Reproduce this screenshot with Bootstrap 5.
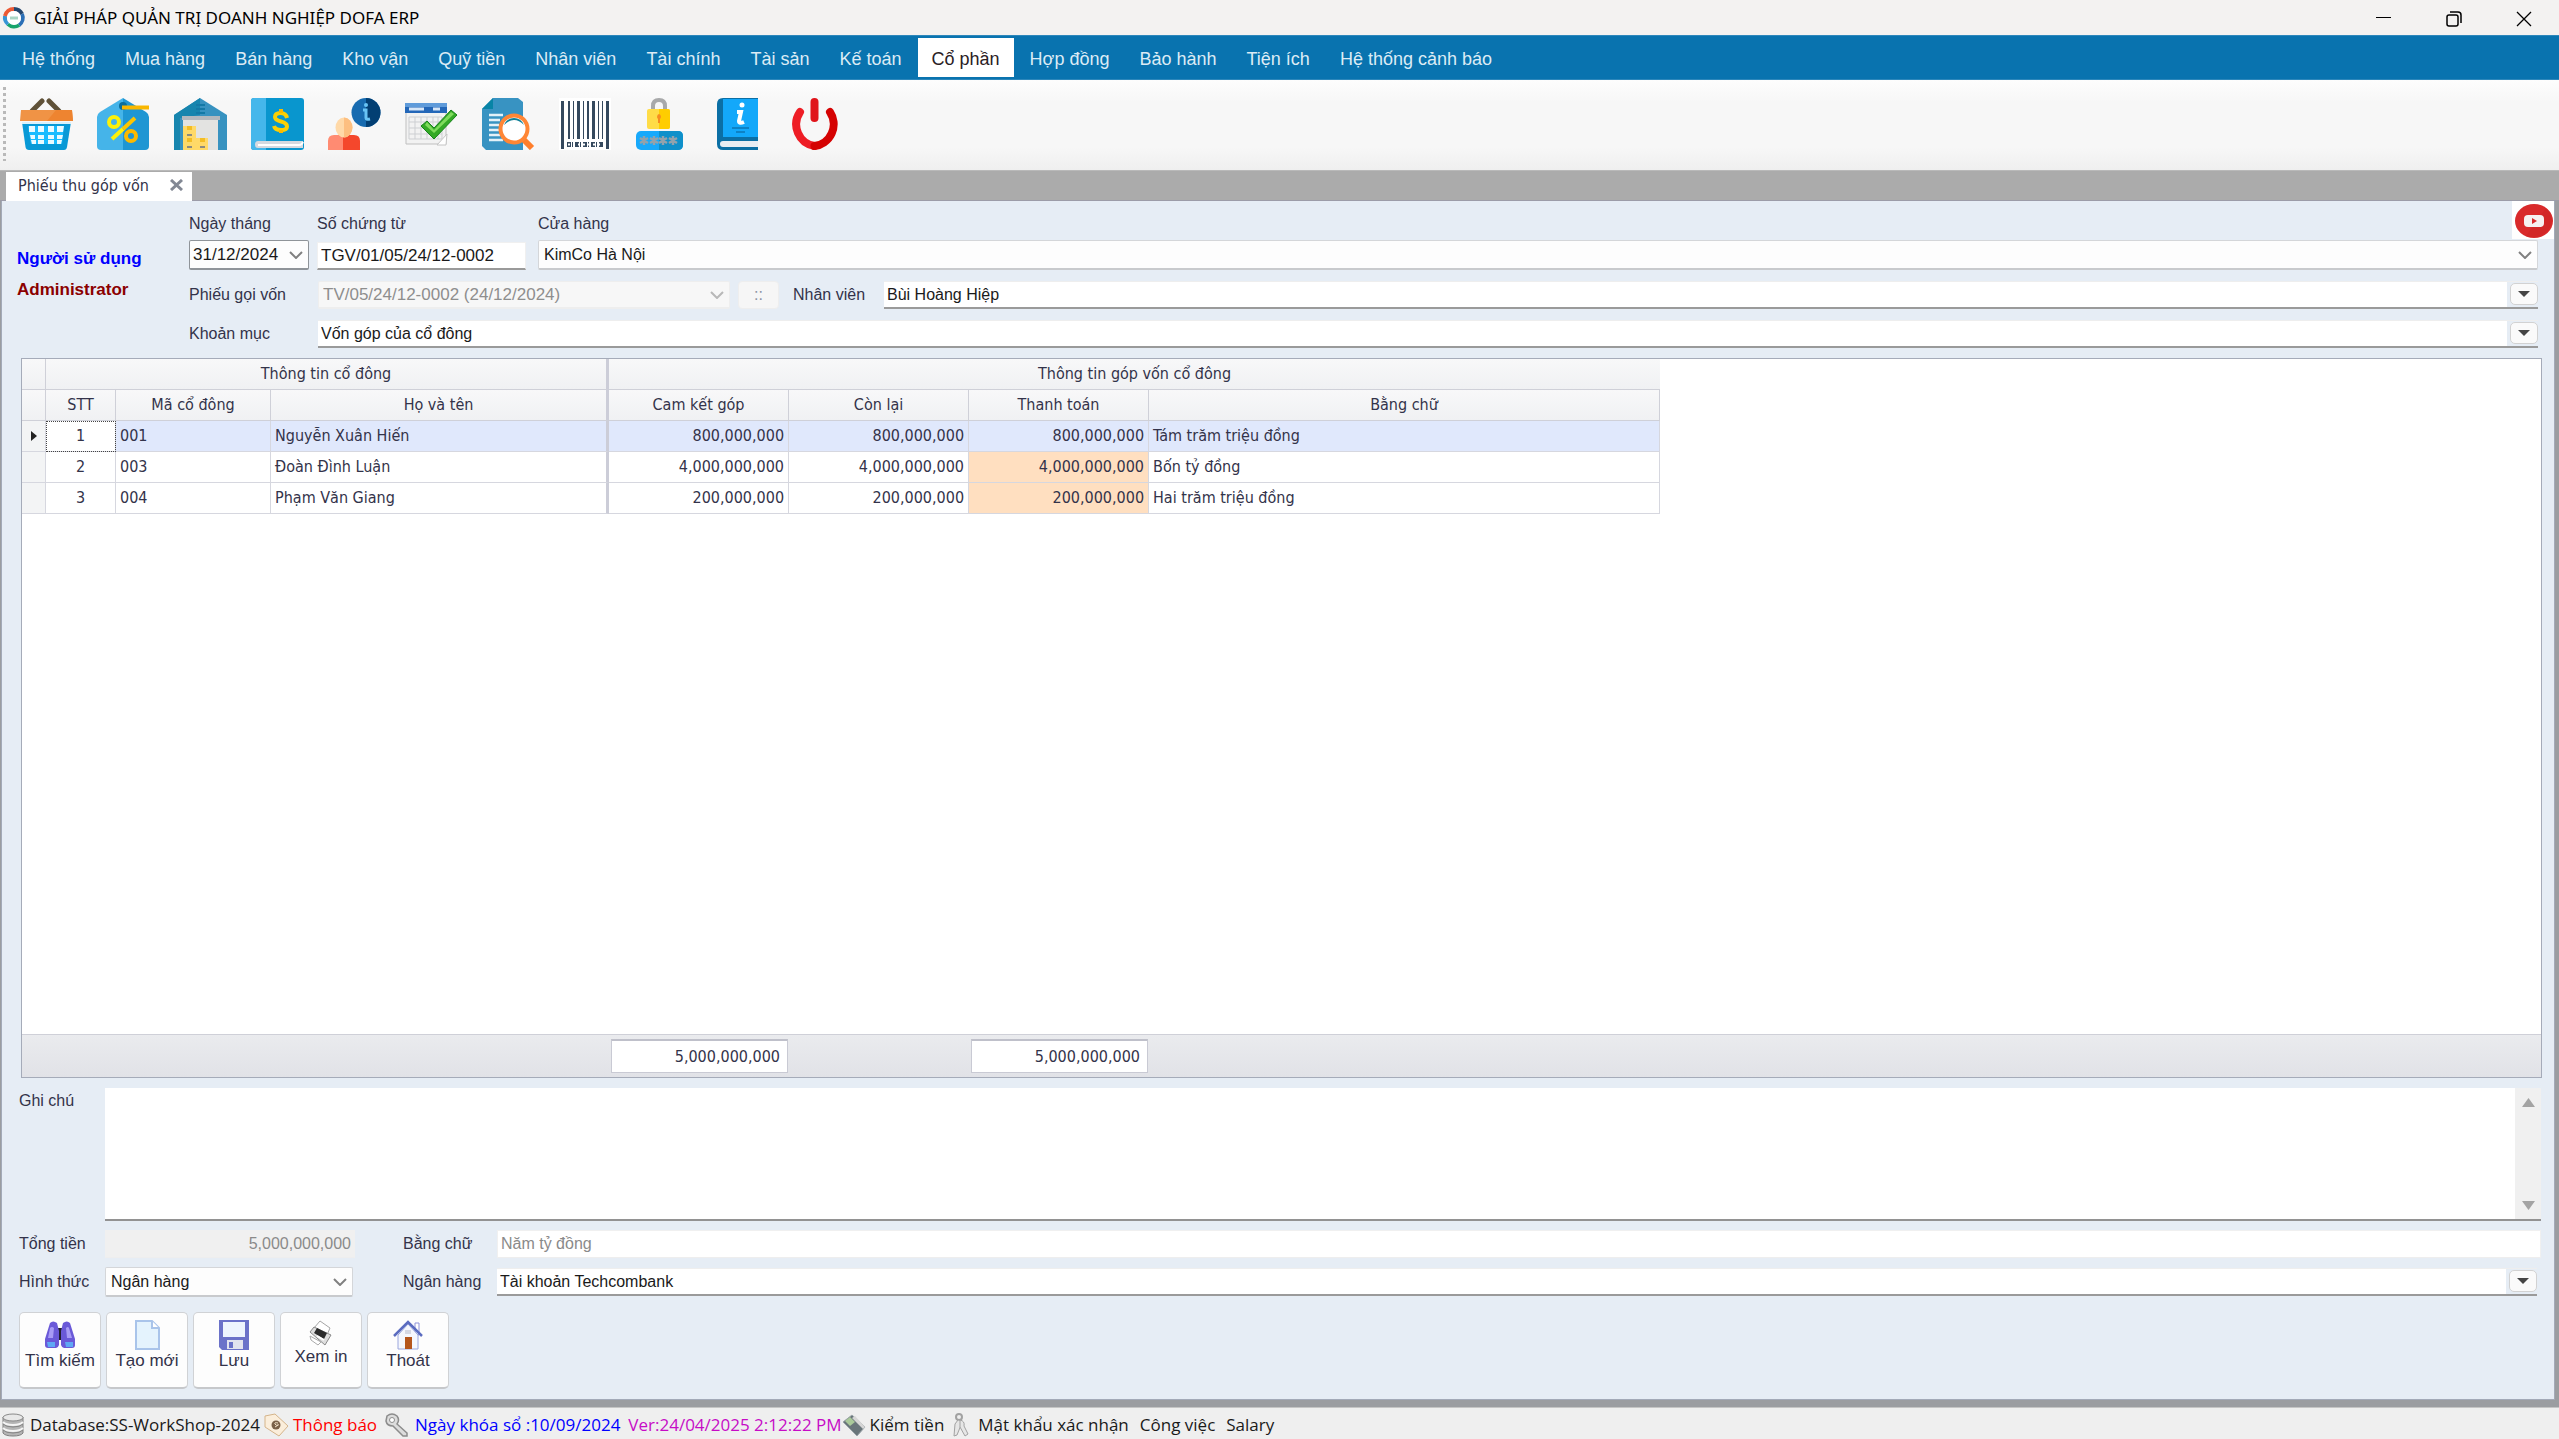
<!DOCTYPE html>
<html lang="vi">
<head>
<meta charset="utf-8">
<meta name="viewport" content="width=device-width, initial-scale=1">
<title>GIẢI PHÁP QUẢN TRỊ DOANH NGHIỆP DOFA ERP</title>
<link href="https://cdn.jsdelivr.net/npm/bootstrap@5.3.0/dist/css/bootstrap.min.css" rel="stylesheet">
<style>
  :root { --ui: "Liberation Sans", Arial, sans-serif; --grid: "DejaVu Sans Condensed", "DejaVu Sans", sans-serif; --shell: "Open Sans", "Noto Sans", sans-serif; --ink: #33334a; }
  body { font: 16px/20px var(--ui); color: var(--ink); background: #efefef; }
  button { font: inherit; color: inherit; }
  /* window chrome */
  .title-bar { height: 35px; background: #f3f2f1; font: 17px/24px "Noto Sans", sans-serif; color: #000; padding-left: 2px; }
  .win-btn { width: 70px; height: 35px; border: 0; background: none; padding: 0; }
  .main-menu { height: 45px; background: #0973af; border-top: 1px solid #2d87bb; border-bottom: 1px solid #2d87bb; padding: 2px 0 2px 8px; }
  .main-menu .nav-link { font-size: 18px; line-height: 20px; color: #dcebf5; padding: 11px 14px 8px; height: 39px; margin-right: 2px; white-space: nowrap; }
  .main-menu .nav-link.active { background: #fff; color: #2a2024; }
  .tool-bar { height: 90px; background: linear-gradient(#fdfdfd, #f7f7f7 25%, #f7f7f7 75%, #efefef); gap: 24px; padding: 0 0 2px 3px; }
  .tool-bar button { border: 0; background: none; padding: 0; width: 53px; height: 52px; display: block; }
  .tool-bar svg { width: 53px; height: 52px; display: block; }
  .grip { width: 3px; height: 74px; margin-right: -10px; background: repeating-linear-gradient(#b9b9b9 0 3px, transparent 3px 6px); }
  .tab-strip { height: 31px; background: #ababab; border-top: 1px solid #b9b9b9; border-bottom: 1px solid #9c9ca8; padding: 1px 0 0 6px; }
  .doc-tab { width: 186px; height: 30px; background: #fff; font: 16px/28px var(--grid); padding-left: 12px; }
  .doc-tab button { width: 18px; height: 18px; border: 0; background: none; padding: 0; display: flex; align-items: center; justify-content: center; margin: 4px 7px 0 0; }
  /* form */
  .frame { background: #9b9da1; padding: 0 4px 7px 1px; border-bottom: 1px solid #c5c5c5; }
  .panel { background: #e6edf5; border: solid #a3aab8; border-width: 0 1px 1px 1px; }
  .who { width: 187px; padding: 35px 0 0 15px; font-size: 17px; font-weight: 700; color: #00f; }
  .who .role { color: #8b0000; margin-top: 11px; }
  .entry { height: 28px; border: 1px solid #f0f0f0; border-bottom: 2px solid #9a9a9a; background: #fff; color: #1a1a1a; font: 16px/20px var(--ui); padding: 2px 3px; border-radius: 0; min-width: 0; }
  .entry.digits { font-size: 17px; }
  .entry:disabled, .entry.flat { border-bottom: 1px solid #eee; color: #8a8a8a; opacity: 1; }
  .entry:disabled { background: #f0f0f0; }
  .pick { height: 30px; border: 1px solid #d4d6d9; border-bottom: 2px solid #c8cacd; background: #fdfdfd no-repeat right 5px center; border-radius: 2px; color: #1a1a1a; font: 16px/20px var(--ui); padding: 3px 5px;
    background-image: url("data:image/svg+xml,%3Csvg xmlns='http://www.w3.org/2000/svg' width='14' height='8' fill='none' stroke='%23808080' stroke-width='2'%3E%3Cpath d='M1 1l6 6 6-6'/%3E%3C/svg%3E"); appearance: none; min-width: 0; }
  .pick.date-pick { font-size: 17px; border-color: #8f9499; padding: 3px; }
  .pick.muted-pick { height: 28px; font-size: 17px; border-color: #eee; background-color: #f7f7f7; color: #8e8e8e; padding: 2px 4px; opacity: 1;
    background-image: url("data:image/svg+xml,%3Csvg xmlns='http://www.w3.org/2000/svg' width='14' height='8' fill='none' stroke='%23b8b8b8' stroke-width='2'%3E%3Cpath d='M1 1l6 6 6-6'/%3E%3C/svg%3E"); }
  .combo { height: 28px; border-bottom: 2px solid #9a9a9a; border-top: 1px solid #eee; min-width: 0; }
  .combo input { border: 0; height: 25px; background: #fff; color: #1a1a1a; padding: 0 3px; min-width: 0; font: 16px/20px var(--ui); }
  .combo button { width: 28px; height: 22px; border: 1px solid #d2d2d2; border-radius: 5px; background: #fafafa; margin: 1px 0 1px 3px; padding: 0; display: flex; align-items: center; justify-content: center; }
  .tiny-btn { width: 41px; height: 28px; border: 1px solid #eee; border-radius: 4px; background: #f6f6f6; color: #8b93a3; padding: 0; }
  .top-form { padding: 13px 16px 10px 0; }
  .stack { gap: 6px; }
  .form-lines { gap: 11px; }
  .w-date { width: 120px; }
  .w-docno { width: 209px; }
  .w-call { width: 412px; }
  .w-staff { width: 91px; margin-left: 14px; }
  .line-label { width: 129px; }
  .yt { top: 0; right: 0; width: 42px; height: 38px; background: #fff; border: 0; padding: 0; }
  .yt svg { display: block; }
  /* grid */
  .sheet { margin: 0 12px 0 19px; border: 1px solid #a5abb9; background: #fff; font: 16px/20px var(--grid); }
  .sheet table { table-layout: fixed; width: 1638px; border-collapse: separate; border-spacing: 0; margin: 0; }
  .c-mark { width: 24px; } .c-no { width: 70px; } .c-code { width: 155px; } .c-name { width: 338px; } .c-sum { width: 180px; } .c-words { width: 511px; }
  .sheet th { font-weight: 400; height: 31px; padding: 0 3px; text-align: center; background: linear-gradient(#f8f8f9, #f0f1f3); border-right: 1px solid #cfd0d8; border-bottom: 1px solid #cfd0d8; }
  .sheet thead tr:first-child th:last-child { border-right: 0; }
  .sheet td { height: 31px; padding: 0 4px; border-right: 1px solid #d6d7df; border-bottom: 1px solid #d6d7df; }
  .sheet .mark-col { background: #f3f4f5; }
  .sheet .split-col { border-right: 3px solid #cccdd8; }
  .sheet .pay { background: #ffdfc0; }
  .sheet tr.current td { background: #e0e8fc; }
  .sheet tr.current td.mark-col { background: #f3f4f5; }
  .sheet tr.current td.focus-cell { background: #fff; outline: 1px dotted #444; outline-offset: -1px; }
  .sums { height: 43px; border-top: 1px solid #cfd0d8; background: linear-gradient(#eaebee, #e1e2e7); padding: 4px 0 0 589px; gap: 183px; }
  .sums input { width: 177px; height: 34px; border: 1px solid #c9cad4; border-top: 2px solid #bfc0ca; background: #fff; text-align: right; padding: 0 7px; font: 16px/20px var(--grid); color: inherit; }
  /* lower form */
  .low-form { padding: 10px 13px 10px 17px; }
  .low-lines { gap: 9px; }
  .low-label { width: 86px; }
  .note-label { padding-top: 3px; }
  .w-total { width: 250px; }
  .w-method { width: 248px; margin-right: 2px; }
  .mid-label { width: 94px; margin-left: 48px; }
  .notes { height: 133px; border-bottom: 2px solid #929292; background: #fff; }
  .notes textarea { border: 0; resize: none; background: #fff; overflow: hidden; padding: 4px; }
  .scroller { width: 26px; background: #f0f0f0; padding: 10px 0 8px; }
  .actions { gap: 5px; padding-top: 6px; }
  .act { width: 82px; height: 77px; border: 1px solid #d0d2d5; border-bottom: 2px solid #c6c8cb; border-radius: 5px; background: #fdfdfd; padding: 7px 0 0; font: 17px/22px var(--ui); white-space: nowrap; display: flex; flex-direction: column; align-items: center; }
  .act svg { display: block; flex: none; }
  .status-bar { height: 31px; background: #efefef; font: 17px/24px var(--shell); color: #1a1a1a; padding: 2px 0 0 2px; white-space: nowrap; }
  .status-bar svg { display: block; flex: none; }
  .status-bar .near-item { margin-left: 6px; }
  .status-bar .gap-item { margin-left: 11px; }
  .alert-text { color: #f00; } .lock-text { color: #00f; } .ver-text { color: #c60cc6; }
</style>
</head>
<body class="d-flex flex-column min-vh-100">

<header class="title-bar d-flex align-items-center">
  <svg width="24" height="24" viewBox="0 0 24 24" fill="none" stroke-width="4" class="me-2"><path d="M12 3a9 9 0 0 1 8 5" stroke="#24476f"/><path d="M20 8a9 9 0 0 1-3 11" stroke="#2b6fb6"/><path d="M17 19a9 9 0 0 1-11-1" stroke="#17a46c"/><path d="M6 18A9 9 0 0 1 3 10" stroke="#3795d5"/><path d="M3 10a9 9 0 0 1 9-7" stroke="#ec5a36"/><circle cx="12" cy="12" r="7" fill="#fff" stroke="none"/><path d="M8 12h8" stroke="#a9d5c4" stroke-width="3"/></svg>
  <span class="flex-grow-1">GIẢI PHÁP QUẢN TRỊ DOANH NGHIỆP DOFA ERP</span>
  <button class="win-btn" aria-label="Thu nhỏ"><svg width="16" height="16" stroke="#000"><path d="M0 6.500h15"/></svg></button>
  <button class="win-btn" aria-label="Phục hồi"><svg width="16" height="16" viewBox="0 0 16 16" fill="none" stroke="#000" stroke-width="1.500"><rect x="1" y="4" width="11" height="11" rx="2"/><path d="M4 1h8q3 0 3 3v8"/></svg></button>
  <button class="win-btn" aria-label="Đóng"><svg width="16" height="16" stroke="#000" stroke-width="1.300"><path d="M1 1l14 14M15 1L1 15"/></svg></button>
</header>

<nav class="main-menu nav flex-nowrap">
  <a class="nav-link" href="#">Hệ thống</a><a class="nav-link" href="#">Mua hàng</a><a class="nav-link" href="#">Bán hàng</a><a class="nav-link" href="#">Kho vận</a><a class="nav-link" href="#">Quỹ tiền</a><a class="nav-link" href="#">Nhân viên</a><a class="nav-link" href="#">Tài chính</a><a class="nav-link" href="#">Tài sản</a><a class="nav-link" href="#">Kế toán</a><a class="nav-link active" href="#" aria-current="page">Cổ phần</a><a class="nav-link" href="#">Hợp đồng</a><a class="nav-link" href="#">Bảo hành</a><a class="nav-link" href="#">Tiện ích</a><a class="nav-link" href="#">Hệ thống cảnh báo</a>
</nav>

<div class="tool-bar d-flex align-items-center" role="toolbar">
  <span class="grip"></span>
  <button aria-label="Mua hàng"><svg viewBox="0 0 53 52"><path d="M22 3L12 13M29 3l10 10" stroke="#5f5138" stroke-width="5" stroke-linecap="round"/><path d="M2 24h49l-4 25q-.5 3-3 3H9q-3 0-3.500-3z" fill="#0899d6"/><path d="M2 24h49v2H2z" fill="#d9f1fb"/><path d="M8 28h36l-2 18H11z" fill="#19bcff"/><path d="M9 28h6v6H9zm9 0h6v6h-6zm10 0h6v6h-6zm9 0h7l-1 6h-6zM10 37h5v4h-4zm8 0h6v4h-6zm10 0h6v4h-6zm9 0h6l-1 4h-5zM11 42h5v4h-4zm7 0h6v4h-6zm10 0h6v4h-6zm9 0h5l-1 4h-4z" fill="#eafaff"/><path d="M1 12h51l1 11H0z" fill="#f09345"/><path d="M36 12h16l1 11H27z" fill="#ee8430"/></svg></button>
  <button aria-label="Khuyến mại"><svg viewBox="0 0 53 52"><path d="M26 0L3 14q-3 2-3 5v29q0 4 4 4h22z" fill="#45b4e9"/><path d="M26 0l23 14q3 2 3 5v29q0 4-4 4H26z" fill="#1f96d3"/><circle cx="26" cy="8" r="4" fill="#0a6e9c"/><path d="M25 9.500h27" stroke="#f9b700" stroke-width="4"/><circle cx="17" cy="24" r="5" fill="none" stroke="#fbf10a" stroke-width="4"/><path d="M15 41l11-10" stroke="#fbf10a" stroke-width="4"/><path d="M26 31l12-11" stroke="#fdc500" stroke-width="4"/><circle cx="34" cy="38" r="5" fill="none" stroke="#fbb900" stroke-width="4"/></svg></button>
  <button aria-label="Kho"><svg viewBox="0 0 53 52"><path d="M0 17L26 0l27 17v35H0z" fill="#3792c0"/><path d="M0 17L26 0v17L6 20v32H0z" fill="#1785ae"/><path d="M22 7h9M22 11h9M22 15h9" stroke="#1479a6" stroke-width="2"/><path d="M9 22h35v30H9z" fill="#e3e3e1"/><path d="M8 18h38v4H8z" fill="#b3b8be"/><path d="M9 28h13v24H9zM22 40h12v12H22z" fill="#ffd968"/><path d="M13 28h5v4h-5zm0 12h5v4h-5zm13 0h5v4h-5z" fill="#f3bd25"/><path d="M13 36h5v2h-5zm0 12h5v2h-5zm13 0h5v2h-5z" fill="#8c8a80"/></svg></button>
  <button aria-label="Sổ quỹ"><svg viewBox="0 0 53 52"><rect width="53" height="52" rx="3" fill="#0996ce"/><path d="M15 0H3Q0 0 0 3v46q0 3 3 3h12z" fill="#45b7eb"/><path d="M52 43H7q-3 0-3 3.500T7 50h45" fill="#d5d9df"/><path d="M52 44q-1 3-4 3H7" fill="none" stroke="#fff" stroke-width="2"/><path d="M36 20q-1-5-6.500-5T24 19q0 3 6 4.500t6 5Q36 32 30 32t-7-4" fill="none" stroke="#fbd005" stroke-width="4"/><path d="M30 11v4m0 17v3" stroke="#fbb900" stroke-width="4"/></svg></button>
  <button aria-label="Khách hàng"><svg viewBox="0 0 53 52"><path d="M0 52v-9q0-6 6-6h10v15z" fill="#ff8b72"/><path d="M32 52v-9q0-6-6-6H15v15z" fill="#f4472c"/><ellipse cx="16" cy="29.500" rx="8.500" ry="10" fill="#ffd9a8"/><path d="M16 19.500a8.500 10 0 0 1 0 20z" fill="#fdbf80"/><circle cx="38" cy="14.500" r="14.500" fill="#176bb0"/><path d="M38 0a14.500 14.500 0 0 1 0 29z" fill="#023f73"/><circle cx="38" cy="7" r="2" fill="#68c4f5"/><path d="M35 12h3v8q0 2 4 1" fill="none" stroke="#68c4f5" stroke-width="3"/></svg></button>
  <button aria-label="Lịch"><svg viewBox="0 0 53 52"><path d="M1 6h40v40H1z" fill="#f2f2f2" stroke="#bfbfbf"/><path d="M4 19h33v22H4zM10 19v22m6-22v22m6-22v22m6-22v22m5-22v22M4 24h33M4 30h33M4 36h33" fill="none" stroke="#cdcfd2"/><path d="M0 5h42v10H0z" fill="#2467b8"/><path d="M0 5h42v4H0z" fill="#5f9bda"/><path d="M4 11h15m9 0h7" stroke="#d6e6f7" stroke-width="3"/><path d="M42 36L32 47h9z" fill="#fff" stroke="#c4c4c4"/><path d="M16 28l6-5 7 7 17-18 6 5-23 24z" fill="#34a926" stroke="#16841b"/><path d="M20 27l9 8 20-19-3-2-17 18-7-8z" fill="#7fdb5d"/></svg></button>
  <button aria-label="Tìm chứng từ"><svg viewBox="0 0 53 52"><path d="M11 0h25l5 4v48H4l-4-4V11z" fill="#3893c2"/><path d="M11 0v11H0z" fill="#0884a6"/><path d="M7 17h14M7 22h11M7 27h10M7 32h10M7 37h11M7 42h14" stroke="#e3f1f8" stroke-width="2.500"/><path d="M42 42l8 8" stroke="#ff7e2b" stroke-width="6"/><circle cx="32" cy="31" r="13.500" fill="#fff" stroke="#ff8635" stroke-width="4"/><path d="M22 27q3-7 10-7t10 7q-5-5-10-5t-10 5" fill="#0f7f96"/></svg></button>
  <button aria-label="Mã vạch"><svg viewBox="0 0 53 52"><path d="M0 0h52v52H0z" fill="#fff"/><g fill="#35495e"><path d="M2 3h3v48H2zM47 3h3v48h-3zM9 3h2v38H9zM14 3h1v38h-1zM18 3h3v38h-3zM24 3h1v38h-1zM28 3h2v38h-2zM33 3h3v38h-3zM39 3h1v38h-1zM43 3h1v38h-1z"/></g><path d="M8 46.500h37" stroke="#35495e" stroke-width="5" stroke-dasharray="4 1 1 2"/><path d="M9 46.500h35" stroke="#fff" stroke-width="2" stroke-dasharray="2 3"/></svg></button>
  <button aria-label="Mật khẩu"><svg viewBox="2 0 53 52"><path d="M19 12V8q0-6 6-6t6 6v4" fill="none" stroke="#a8a9aa" stroke-width="4"/><rect x="13" y="11" width="23" height="20" rx="2" fill="#ffdc47"/><path d="M25 11h9q2 0 2 2v16q0 2-2 2h-9z" fill="#ffcd00"/><path d="M25 16a3 3 0 0 1 1 5v4h-2v-4a3 3 0 0 1 1-5" fill="#f78c1f"/><rect x="2" y="33" width="47" height="19" rx="5" fill="#18a9fb"/><path d="M25 33h19q5 0 5 5v9q0 5-5 5H25z" fill="#0f90ca"/><path d="M10 38v9m-4-7l8 5m0-5l-8 5M20 38v9m-4-7l8 5m0-5l-8 5M29 38v9m-4-7l8 5m0-5l-8 5M39 38v9m-4-7l8 5m0-5l-8 5" stroke="#93a2ac" stroke-width="2.500"/></svg></button>
  <button aria-label="Hướng dẫn"><svg viewBox="2 0 53 52"><path d="M47 0H12Q6 0 6 6v40q0 6 6 6h35z" fill="#0b6fa5"/><path d="M12 1h35v38H12z" fill="#13a8fa"/><path d="M47 43H12q-3 0-3 3t3 3h35z" fill="#e8edf3"/><circle cx="31" cy="7" r="2.500" fill="#fff"/><path d="M26 14h4l-2 9q0 3 5 1" fill="none" stroke="#fff" stroke-width="4"/><path d="M21 30h17M25 34h9" stroke="#0d82c5" stroke-width="2"/></svg></button>
  <button aria-label="Thoát chương trình"><svg viewBox="2 0 53 52"><path d="M12 14A22 22 0 0 0 26.500 48" fill="none" stroke="#ee1d25" stroke-width="8" stroke-linecap="round"/><path d="M42 14a22 22 0 0 1-15.500 34" fill="none" stroke="#d50202" stroke-width="8" stroke-linecap="round"/><path d="M26.500 4v16" stroke="#e0141a" stroke-width="8" stroke-linecap="round"/></svg></button>
</div>

<div class="tab-strip">
  <div class="doc-tab d-flex"><span class="flex-grow-1">Phiếu thu góp vốn</span><button aria-label="Đóng thẻ"><svg width="13" height="12" stroke="#828894" stroke-width="3"><path d="M1 1l11 10M12 1L1 11"/></svg></button></div>
</div>

<main class="frame flex-grow-1 d-flex flex-column">
<div class="panel flex-grow-1 d-flex flex-column position-relative">
  <button class="yt position-absolute" aria-label="Video hướng dẫn"><svg width="42" height="38" viewBox="0 0 42 38"><ellipse cx="22" cy="20" rx="19" ry="17" fill="#d92a2b"/><path d="M34 7a19 17 0 0 1-20 28z" fill="#cb2324" opacity=".5"/><rect x="12" y="14" width="20" height="12" rx="4" fill="#f6f1f1"/><path d="M20 17v6l5-3z" fill="#d92a2b"/></svg></button>

  <div class="top-form d-flex">
    <div class="who">
      <div>Người sử dụng</div>
      <div class="role">Administrator</div>
    </div>
    <div class="form-lines flex-grow-1 d-flex flex-column">
      <div class="d-flex">
        <div class="w-date stack d-flex flex-column"><label for="ngay">Ngày tháng</label><input id="ngay" class="pick date-pick" value="31/12/2024"></div>
        <div class="w-docno stack d-flex flex-column justify-content-between ms-2"><label for="so">Số chứng từ</label><input id="so" class="entry digits" value="TGV/01/05/24/12-0002"></div>
        <div class="stack d-flex flex-column ms-2 ps-1 flex-grow-1"><label for="ch">Cửa hàng</label><select id="ch" class="pick"><option>KimCo Hà Nội</option></select></div>
      </div>
      <div class="d-flex align-items-center">
        <label for="goi" class="line-label">Phiếu gọi vốn</label>
        <select id="goi" class="pick muted-pick w-call" disabled><option>TV/05/24/12-0002 (24/12/2024)</option></select>
        <button class="tiny-btn ms-2">::</button>
        <label for="nv" class="w-staff">Nhân viên</label>
        <div class="combo flex-grow-1 d-flex"><input id="nv" class="flex-grow-1" value="Bùi Hoàng Hiệp"><button aria-label="Chọn nhân viên"><svg width="12" height="6"><path d="M0 0h12L6 6z" fill="#444"/></svg></button></div>
      </div>
      <div class="d-flex align-items-center">
        <label for="km" class="line-label">Khoản mục</label>
        <div class="combo flex-grow-1 d-flex"><input id="km" class="flex-grow-1" value="Vốn góp của cổ đông"><button aria-label="Chọn khoản mục"><svg width="12" height="6"><path d="M0 0h12L6 6z" fill="#444"/></svg></button></div>
      </div>
    </div>
  </div>

  <section class="sheet flex-grow-1 d-flex flex-column">
    <div class="flex-grow-1">
      <table>
        <colgroup><col class="c-mark"><col class="c-no"><col class="c-code"><col class="c-name"><col class="c-sum"><col class="c-sum"><col class="c-sum"><col class="c-words"></colgroup>
        <thead>
          <tr><th></th><th colspan="3" class="split-col">Thông tin cổ đông</th><th colspan="4">Thông tin góp vốn cổ đông</th></tr>
          <tr><th></th><th>STT</th><th>Mã cổ đông</th><th class="split-col">Họ và tên</th><th>Cam kết góp</th><th>Còn lại</th><th>Thanh toán</th><th>Bằng chữ</th></tr>
        </thead>
        <tbody>
          <tr class="current"><td class="mark-col"><svg width="6" height="10" class="d-block mx-auto"><path d="M0 0l6 5-6 5z" fill="#222"/></svg></td><td class="text-center focus-cell">1</td><td>001</td><td class="split-col">Nguyễn Xuân Hiến</td><td class="text-end">800,000,000</td><td class="text-end">800,000,000</td><td class="text-end">800,000,000</td><td>Tám trăm triệu đồng</td></tr>
          <tr><td class="mark-col"></td><td class="text-center">2</td><td>003</td><td class="split-col">Đoàn Đình Luận</td><td class="text-end">4,000,000,000</td><td class="text-end">4,000,000,000</td><td class="text-end pay">4,000,000,000</td><td>Bốn tỷ đồng</td></tr>
          <tr><td class="mark-col"></td><td class="text-center">3</td><td>004</td><td class="split-col">Phạm Văn Giang</td><td class="text-end">200,000,000</td><td class="text-end">200,000,000</td><td class="text-end pay">200,000,000</td><td>Hai trăm triệu đồng</td></tr>
        </tbody>
      </table>
    </div>
    <div class="sums d-flex"><input readonly aria-label="Tổng cam kết góp" value="5,000,000,000"><input readonly aria-label="Tổng thanh toán" value="5,000,000,000"></div>
  </section>

  <div class="low-form">
    <div class="low-lines d-flex flex-column">
      <div class="d-flex">
        <label for="gc" class="low-label note-label">Ghi chú</label>
        <div class="notes flex-grow-1 d-flex">
          <textarea id="gc" class="flex-grow-1"></textarea>
          <div class="scroller d-flex flex-column justify-content-between align-items-center"><svg width="13" height="10"><path d="M6.500 0L13 9H0z" fill="#a3a3a3"/></svg><svg width="13" height="10"><path d="M0 0h13L6.500 9z" fill="#a3a3a3"/></svg></div>
        </div>
      </div>
      <div class="d-flex align-items-center">
        <label for="tt" class="low-label">Tổng tiền</label>
        <input id="tt" class="entry w-total text-end" disabled value="5,000,000,000">
        <label for="bc" class="mid-label">Bằng chữ</label>
        <input id="bc" class="entry flat flex-grow-1" readonly value="Năm tỷ đồng">
      </div>
      <div class="d-flex align-items-center">
        <label for="ht" class="low-label">Hình thức</label>
        <select id="ht" class="pick w-method"><option>Ngân hàng</option></select>
        <label for="nh" class="mid-label">Ngân hàng</label>
        <div class="combo flex-grow-1 d-flex me-1"><input id="nh" class="flex-grow-1" value="Tài khoản Techcombank"><button aria-label="Chọn ngân hàng"><svg width="12" height="6"><path d="M0 0h12L6 6z" fill="#444"/></svg></button></div>
      </div>
      <div class="actions d-flex">
        <button class="act"><svg width="30" height="30" viewBox="0 0 30 30"><path d="M12 8h6v12h-6z" fill="#23202e"/><path d="M5 3q3-3 7 0l2 8v14q-1 3-3 3H3q-3 0-3-3v-6z" fill="#6a59d8"/><path d="M25 3q-3-3-7 0l-2 8v14q1 3 3 3h8q3 0 3-3v-6z" fill="#6a59d8"/><path d="M5 8q2-2 4 0l-1 10H3zM21 8q2-2 3 0l3 10h-5z" fill="#a79bf5"/><path d="M2 22h8v5H3zM20 22h8v5h-7z" fill="#5fa8f5"/></svg>Tìm kiếm</button>
        <button class="act"><svg width="30" height="30" viewBox="0 0 30 30"><path d="M4 1h16l7 7v21H4z" fill="#e4f3fd" stroke="#a9c4ea" stroke-width="2"/><path d="M20 1v7h7" fill="#fff" stroke="#a9c4ea" stroke-width="2"/></svg>Tạo mới</button>
        <button class="act"><svg width="30" height="30" viewBox="0 0 30 30"><path d="M0 0h30v30H3l-3-3z" fill="#6b72c9"/><path d="M4 2h22v15H4z" fill="#eef5fe"/><path d="M8 20h16v9H8z" fill="#e2e3ee"/><path d="M10 22h4v6h-4z" fill="#6b72c9"/></svg>Lưu</button>
        <button class="act"><svg width="26" height="26" viewBox="0 0 26 26"><path d="M6 8l6-7 10 7-3 7z" fill="#fff" stroke="#a5a5a5"/><path d="M2 12l4-5 17 8-6 10z" fill="#dedede" stroke="#8a8a8a"/><path d="M9 8l10 5-3 6-10-6z" fill="#2c2c2c"/><path d="M9 16l7 4" stroke="#fff" stroke-width="2"/><path d="M2 16l11 6-3 3-7-5z" fill="#fff" stroke="#aaa"/></svg>Xem in</button>
        <button class="act"><svg width="30" height="30" viewBox="0 0 30 30"><path d="M22 3h4v12h-4z" fill="#fff" stroke="#8f93d8"/><path d="M5 15L15 4l10 11v14H5z" fill="#f5f7fd" stroke="#9aa6dd"/><path d="M1 16L15 2l14 14" fill="none" stroke="#5b6cc0" stroke-width="2.500"/><path d="M12 17h7v12h-7z" fill="#b5561c"/><path d="M12 10h6v4h-6z" fill="#d5d8e4"/></svg>Thoát</button>
      </div>
    </div>
  </div>
</div>
</main>

<footer class="status-bar d-flex align-items-center">
  <svg width="22" height="24" viewBox="0 0 22 24"><path d="M1 4v16q2 3 10 3t10-3V4z" fill="#b4b4b4" stroke="#808080"/><path d="M1 9q3 3 10 3t10-3M1 15q3 3 10 3t10-3" fill="none" stroke="#f4f4f4" stroke-width="2"/><path d="M1 11q3 3 10 3t10-3M1 17q3 3 10 3t10-3" fill="none" stroke="#858585"/><ellipse cx="11" cy="4.500" rx="10" ry="3.500" fill="#e8e8e8" stroke="#8a8a8a"/></svg>
  <span class="near-item">Database:SS-WorkShop-2024</span>
  <svg class="ms-1" width="25" height="24" viewBox="0 0 25 24"><path d="M1 3l10-2 13 12-9 10L1 14z" fill="#fbeedb" stroke="#d5b48a"/><circle cx="12" cy="12" r="4.500" fill="#7a6149"/><path d="M14 10q-4-1-3 1t3 1-3 2" stroke="#f3e2c8" fill="none"/></svg>
  <span class="ms-1 alert-text">Thông báo</span>
  <svg class="ms-2" width="24" height="24" viewBox="0 0 24 24"><path d="M2 3q5-4 10 0 3 4 0 8l10 9v3h-4L8 13q-6 0-7-5z" fill="#dcdcdc" stroke="#8c8c8c" stroke-width="1.500"/><circle cx="7" cy="7" r="2.500" fill="#fff" stroke="#8c8c8c"/></svg>
  <span class="near-item lock-text">Ngày khóa sổ :10/09/2024</span>
  <span class="ms-2 ver-text">Ver:24/04/2025 2:12:22 PM</span>
  <svg width="24" height="24" viewBox="0 0 24 24"><path d="M1 9l9-7 13 12-8 9z" fill="#69757a" stroke="#9aa4a8"/><path d="M3 8l5-4 5 5-5 4z" fill="#a9c99a"/><path d="M13 3l10 11-2 2L10 5z" fill="#d6d6d6"/></svg>
  <span class="ms-1">Kiểm tiền</span>
  <svg class="ms-2" width="18" height="24" viewBox="0 0 18 24"><g fill="#e6e6e6" stroke="#a2a2a2"><circle cx="7" cy="4" r="3" fill="none" stroke-width="2"/><path d="M6 7q4 0 3 5l-4 10-3 1 1-12z"/><path d="M8 7q5 1 4 6l4 8-3 2-5-9z"/></g></svg>
  <span class="ms-2">Mật khẩu xác nhận</span>
  <span class="gap-item">Công việc</span>
  <span class="gap-item">Salary</span>
</footer>

<script src="https://cdn.jsdelivr.net/npm/bootstrap@5.3.0/dist/js/bootstrap.bundle.min.js"></script>
</body>
</html>
